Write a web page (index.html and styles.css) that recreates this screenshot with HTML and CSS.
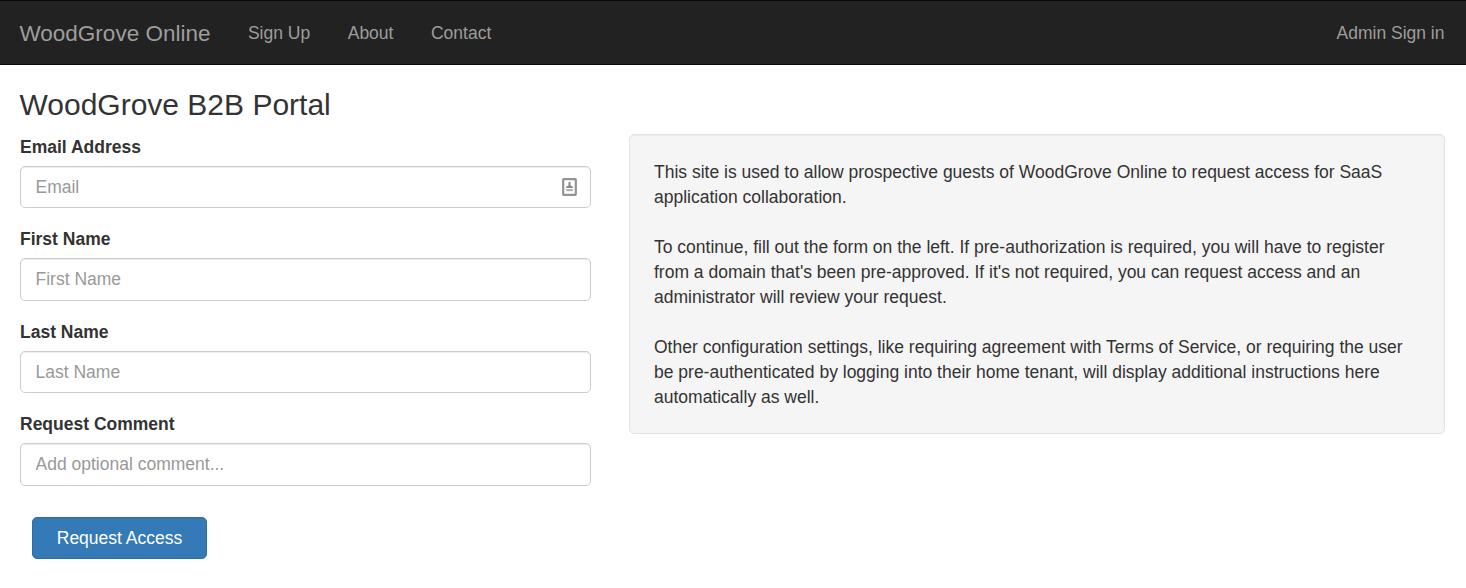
FILE: index.html
```html
<!DOCTYPE html>
<html lang="en">
<head>
<meta charset="utf-8">
<title>WoodGrove Online</title>
<link rel="stylesheet" href="styles.css">
</head>
<body>
<nav class="navbar">
  <a class="brand">WoodGrove Online</a>
  <a class="nav-link">Sign Up</a>
  <a class="nav-link">About</a>
  <a class="nav-link">Contact</a>
  <a class="nav-link nav-right">Admin Sign in</a>
</nav>
<main class="content">
  <h2 class="title">WoodGrove B2B Portal</h2>
  <div class="columns">
    <form class="form">
      <div class="group">
        <label class="label" for="email">Email Address</label>
        <div class="field">
          <input class="control" id="email" placeholder="Email">
          <svg class="autofill" viewBox="0 0 15 18" width="15" height="18">
            <rect x="1.2" y="1.2" width="12.6" height="15.6" rx=".6" fill="#fff" stroke="#939393" stroke-width="2.2"/>
            <path d="M6.5 4h2v3.5l2.3 1v1.5H4.2V8.5l2.3-1Z" fill="#8a8a8a"/>
            <path d="M4.2 11h6.6v2.2H4.2z" fill="#b0b0b0"/>
          </svg>
        </div>
      </div>
      <div class="group">
        <label class="label" for="first">First Name</label>
        <input class="control control-tall" id="first" placeholder="First Name">
      </div>
      <div class="group">
        <label class="label" for="last">Last Name</label>
        <input class="control" id="last" placeholder="Last Name">
      </div>
      <div class="group">
        <label class="label" for="comment">Request Comment</label>
        <input class="control control-tall" id="comment" placeholder="Add optional comment...">
      </div>
      <button class="submit" type="button">Request Access</button>
    </form>
    <section class="well">
      This site is used to allow prospective guests of WoodGrove Online to request access for SaaS<br>application collaboration.<br><br>
      To continue, fill out the form on the left. If pre-authorization is required, you will have to register<br>from a domain that's been pre-approved. If it's not required, you can request access and an<br>administrator will review your request.<br><br>
      Other configuration settings, like requiring agreement with Terms of Service, or requiring the user<br>be pre-authenticated by logging into their home tenant, will display additional instructions here<br>automatically as well.
    </section>
  </div>
</main>
</body>
</html>
```
FILE: styles.css
```css
* { box-sizing: border-box; }
body {
  margin: 0;
  background: #fff;
  color: #333;
  font: 17.5px/25px "Liberation Sans", Arial, sans-serif;
}
.navbar {
  display: flex;
  align-items: center;
  height: 65px;
  padding: 1px 21.5px 0 19.5px;
  background: #222;
  border-top: 1px solid #080808;
  border-bottom: 1px solid #080808;
  color: #9d9d9d;
}
.brand { font-size: 22.5px; margin-right: 37.5px; }
.nav-link { margin-right: 37.5px; }
.nav-right { margin: 0 0 0 auto; }
.content { padding: 24px 21px 0 20px; }
.title { margin: 0 0 0 -.5px; font-size: 30px; font-weight: 400; line-height: 32px; }
.columns { display: flex; align-items: flex-start; padding-top: 13px; }
.form { width: 571px; margin-right: 38px; padding-top: 1px; }
.group { margin-bottom: 19px; }
.label { display: block; font-weight: 700; margin-bottom: 6px; }
.field { position: relative; }
.control {
  display: block;
  width: 100%;
  height: 42px;
  padding: 7px 14.5px;
  border: 1px solid #ccc;
  border-radius: 5px;
  background: #fff;
  box-shadow: inset 0 1px 1px rgba(0, 0, 0, .075);
  color: #555;
  font: inherit;
}
.control-tall { height: 43px; padding-bottom: 8px; }
.control::placeholder { color: #999; opacity: 1; }
.autofill { position: absolute; right: 14px; top: 12px; }
.submit {
  display: block;
  width: 175px;
  height: 42px;
  margin: 31px 0 0 12px;
  padding: 1px 0 0;
  border: 1px solid #2e6da4;
  border-radius: 5px;
  background: #337ab7;
  color: #fff;
  font: inherit;
}
.well {
  flex: 1;
  height: 300px;
  padding: 25px 24px;
  border: 1px solid #e3e3e3;
  border-radius: 5px;
  background: #f5f5f5;
  box-shadow: inset 0 1px 1px rgba(0, 0, 0, .05);
  white-space: nowrap;
}
```
